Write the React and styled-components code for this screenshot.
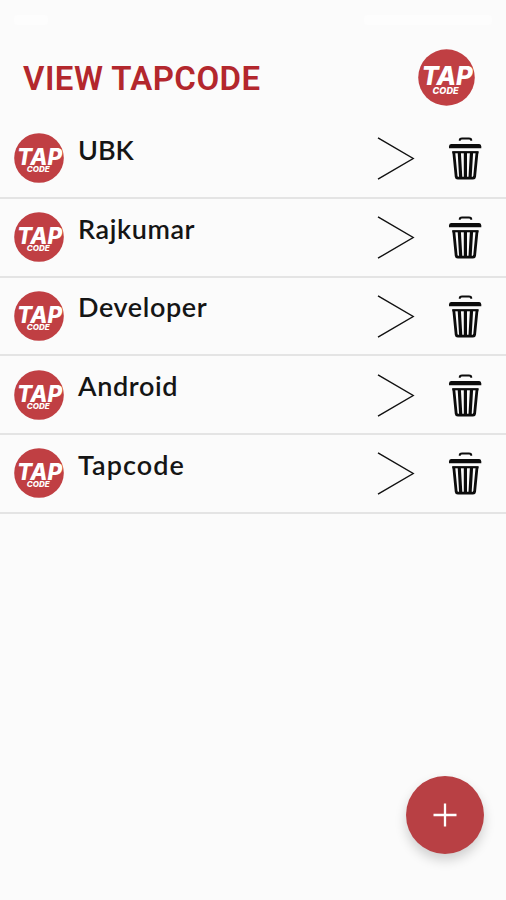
import React from "react";
import styled, { createGlobalStyle } from "styled-components";

const cards = [
  { id: 1, name: "UBK", spacing: "0px" },
  { id: 2, name: "Rajkumar", spacing: "0.6px" },
  { id: 3, name: "Developer", spacing: "0.6px" },
  { id: 4, name: "Android", spacing: "0.65px" },
  { id: 5, name: "Tapcode", spacing: "1.05px" },
];

function Logo({ size }) {
  return (
    <LogoSvg $size={size} viewBox="0 0 50 50">
      <circle cx="25" cy="25" r="24.8" fill="#c03f43" />
      <text x="3" y="31.7" fontSize="22.6" textLength="45" lengthAdjust="spacingAndGlyphs">
        TAP
      </text>
      <text x="12.8" y="39.2" fontSize="8" textLength="22.8" lengthAdjust="spacingAndGlyphs">
        CODE
      </text>
    </LogoSvg>
  );
}

function Arrow() {
  return (
    <svg width="38" height="44" viewBox="0 0 38 44" fill="none" stroke="#111111" strokeWidth="1.4">
      <path d="M1 1.8 36.2 22.5 1 43.2" />
    </svg>
  );
}

function Trash() {
  return (
    <svg width="34" height="44" viewBox="0 0 34 44" fill="none" stroke="#0c0c0c">
      <path d="M11.8 4.7V3.9Q12 2.4 14 2.4H21Q23 2.4 23.2 3.9V4.7" strokeWidth="2" />
      <path d="M1 12.2V10.6Q1 8 3 8H31.3Q33.3 8 33.3 10.6V12.2Z" fill="#0c0c0c" stroke="none" />
      <path d="M4.2 16.2H30.6" strokeWidth="2.2" />
      <path d="M5.8 16.3 8.2 40.8Q8.4 42.2 9.8 42.2H25Q26.4 42.2 26.6 40.8L29 16.3" strokeWidth="2.8" />
      <path d="M11.3 16.7 12.7 41M17.4 16.7V41M23.5 16.7 22.1 41" strokeWidth="3.2" />
    </svg>
  );
}

export default function App() {
  return (
    <Screen>
      <GlobalStyle />
      <StatusBar>
        <StatusMark $width="34px" />
        <StatusMark $width="128px" />
      </StatusBar>
      <Header>
        <Title>VIEW TAPCODE</Title>
        <Logo size="57px" />
      </Header>
      <List>
        {cards.map((card) => (
          <Row key={card.id}>
            <Logo size="50px" />
            <Name $spacing={card.spacing}>{card.name}</Name>
            <RowButton $gap="33px">
              <Arrow />
            </RowButton>
            <RowButton>
              <Trash />
            </RowButton>
          </Row>
        ))}
      </List>
      <AddButton>
        <svg width="24" height="24" viewBox="0 0 24 24" stroke="#ffffff" strokeWidth="2.3">
          <path d="M12 .5V23.5M.5 12H23.5" />
        </svg>
      </AddButton>
    </Screen>
  );
}

const GlobalStyle = createGlobalStyle`
  * {
    box-sizing: border-box;
  }
  body {
    margin: 0;
    background-color: #fbfbfb;
  }
`;
const Screen = styled.div`
  position: relative;
  width: 100%;
  height: 900px;
  overflow: hidden;
  background-color: #fbfbfb;
`;
const StatusBar = styled.div`
  display: flex;
  justify-content: space-between;
  align-items: center;
  height: 40px;
  padding: 0 14px;
`;
const StatusMark = styled.div`
  width: ${(props) => props.$width};
  height: 10px;
  border-radius: 4px;
  background-color: #fdfdfd;
`;
const Header = styled.header`
  display: flex;
  justify-content: space-between;
  align-items: center;
  height: 80px;
  padding: 0 31px 5px 23px;
`;
const Title = styled.h1`
  margin: 0;
  padding-top: 3px;
  font-family: Roboto, sans-serif;
  font-size: 33px;
  font-weight: 600;
  line-height: 40px;
  letter-spacing: 0.45px;
  color: #b3272d;
  white-space: nowrap;
`;
const List = styled.div`
  display: flex;
  flex-direction: column;
`;
const Row = styled.div`
  display: flex;
  align-items: center;
  height: 78.75px;
  padding: 0 24px 0 14px;
  border-bottom: 2px solid #e4e4e4;
`;
const LogoSvg = styled.svg`
  flex: none;
  width: ${(props) => props.$size};
  height: ${(props) => props.$size};
  text {
    font-family: Inter, sans-serif;
    font-weight: 800;
    font-style: italic;
    fill: #ffffff;
  }
`;
const Name = styled.div`
  flex: 1;
  margin-left: 14px;
  padding-bottom: 17px;
  font-family: Lato, sans-serif;
  font-size: 27px;
  font-weight: 600;
  line-height: 34px;
  letter-spacing: ${(props) => props.$spacing};
  color: #151515;
`;
const RowButton = styled.div`
  display: flex;
  flex: none;
  margin-right: ${(props) => props.$gap || "0"};
`;
const AddButton = styled.div`
  position: absolute;
  right: 22px;
  bottom: 46px;
  display: flex;
  align-items: center;
  justify-content: center;
  width: 78px;
  height: 78px;
  border-radius: 50%;
  background-color: #b84044;
  box-shadow: 0 6px 12px rgba(0, 0, 0, 0.18);
`;
